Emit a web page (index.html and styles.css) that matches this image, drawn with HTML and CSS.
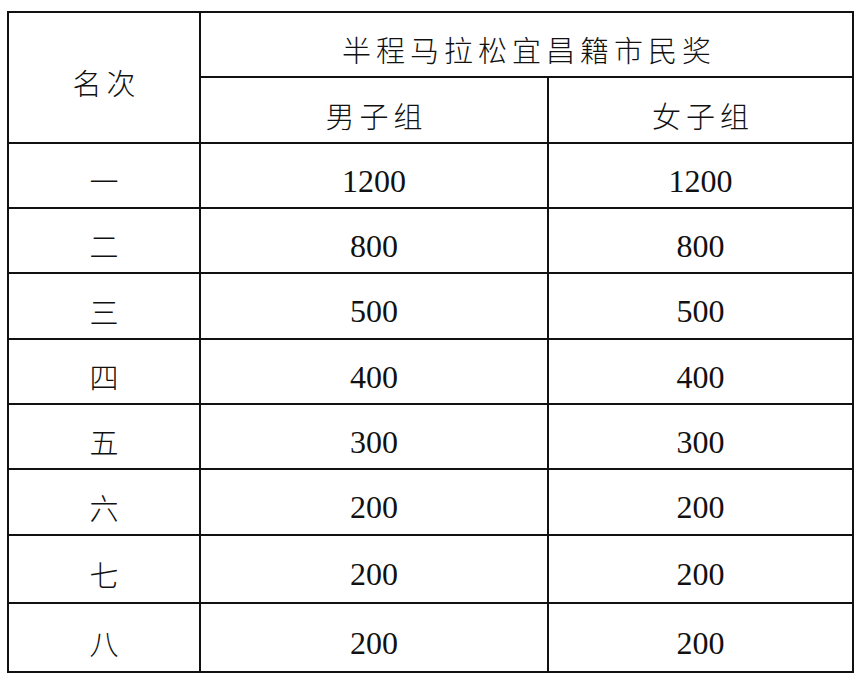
FILE: index.html
```html
<!DOCTYPE html>
<html lang="zh-CN">
<head>
<meta charset="utf-8">
<title>半程马拉松宜昌籍市民奖</title>
<link rel="stylesheet" href="styles.css">
</head>
<body>
<table class="prize">
  <colgroup>
    <col class="c-rank">
    <col class="c-men">
    <col class="c-women">
  </colgroup>
  <thead>
    <tr class="h1">
      <th class="zh" rowspan="2">名次</th>
      <th class="zh" colspan="2">半程马拉松宜昌籍市民奖</th>
    </tr>
    <tr class="h2">
      <th class="zh">男子组</th>
      <th class="zh">女子组</th>
    </tr>
  </thead>
  <tbody>
    <tr class="r65"><td class="zh">一</td><td class="num">1200</td><td class="num">1200</td></tr>
    <tr class="r65"><td class="zh">二</td><td class="num">800</td><td class="num">800</td></tr>
    <tr class="r66"><td class="zh">三</td><td class="num">500</td><td class="num">500</td></tr>
    <tr class="r65"><td class="zh">四</td><td class="num">400</td><td class="num">400</td></tr>
    <tr class="r65"><td class="zh">五</td><td class="num">300</td><td class="num">300</td></tr>
    <tr class="r66"><td class="zh">六</td><td class="num">200</td><td class="num">200</td></tr>
    <tr class="r68"><td class="zh">七</td><td class="num">200</td><td class="num">200</td></tr>
    <tr class="r69"><td class="zh">八</td><td class="num">200</td><td class="num">200</td></tr>
  </tbody>
</table>
</body>
</html>
```

FILE: styles.css
```css
html, body {
  margin: 0;
  padding: 0;
  background: #ffffff;
}

body {
  padding: 11px 0 0 7px;
}

.prize {
  border-collapse: collapse;
  table-layout: fixed;
  width: 847px;
  color: #111;
}

.c-rank { width: 192px; }
.c-men { width: 348px; }
.c-women { width: 305px; }

.prize th,
.prize td {
  border: 2px solid #111;
  text-align: center;
  vertical-align: middle;
  padding: 10px 0 0 0;
  font-weight: normal;
}

.zh {
  font-family: "Noto Sans CJK SC", sans-serif;
  font-weight: 300;
  font-size: 29px;
  letter-spacing: 5px;
  text-indent: 5px;
  line-height: 1;
}

.prize th.zh,
.prize td.zh { font-weight: 300; }

.num {
  font-family: "Liberation Serif", serif;
  font-size: 32px;
  line-height: 1;
}

.h1 { height: 65px; }
.h2 { height: 66px; }
.r65 { height: 65px; }
.r66 { height: 66px; }
.r68 { height: 68px; }
.r69 { height: 69px; }
```
